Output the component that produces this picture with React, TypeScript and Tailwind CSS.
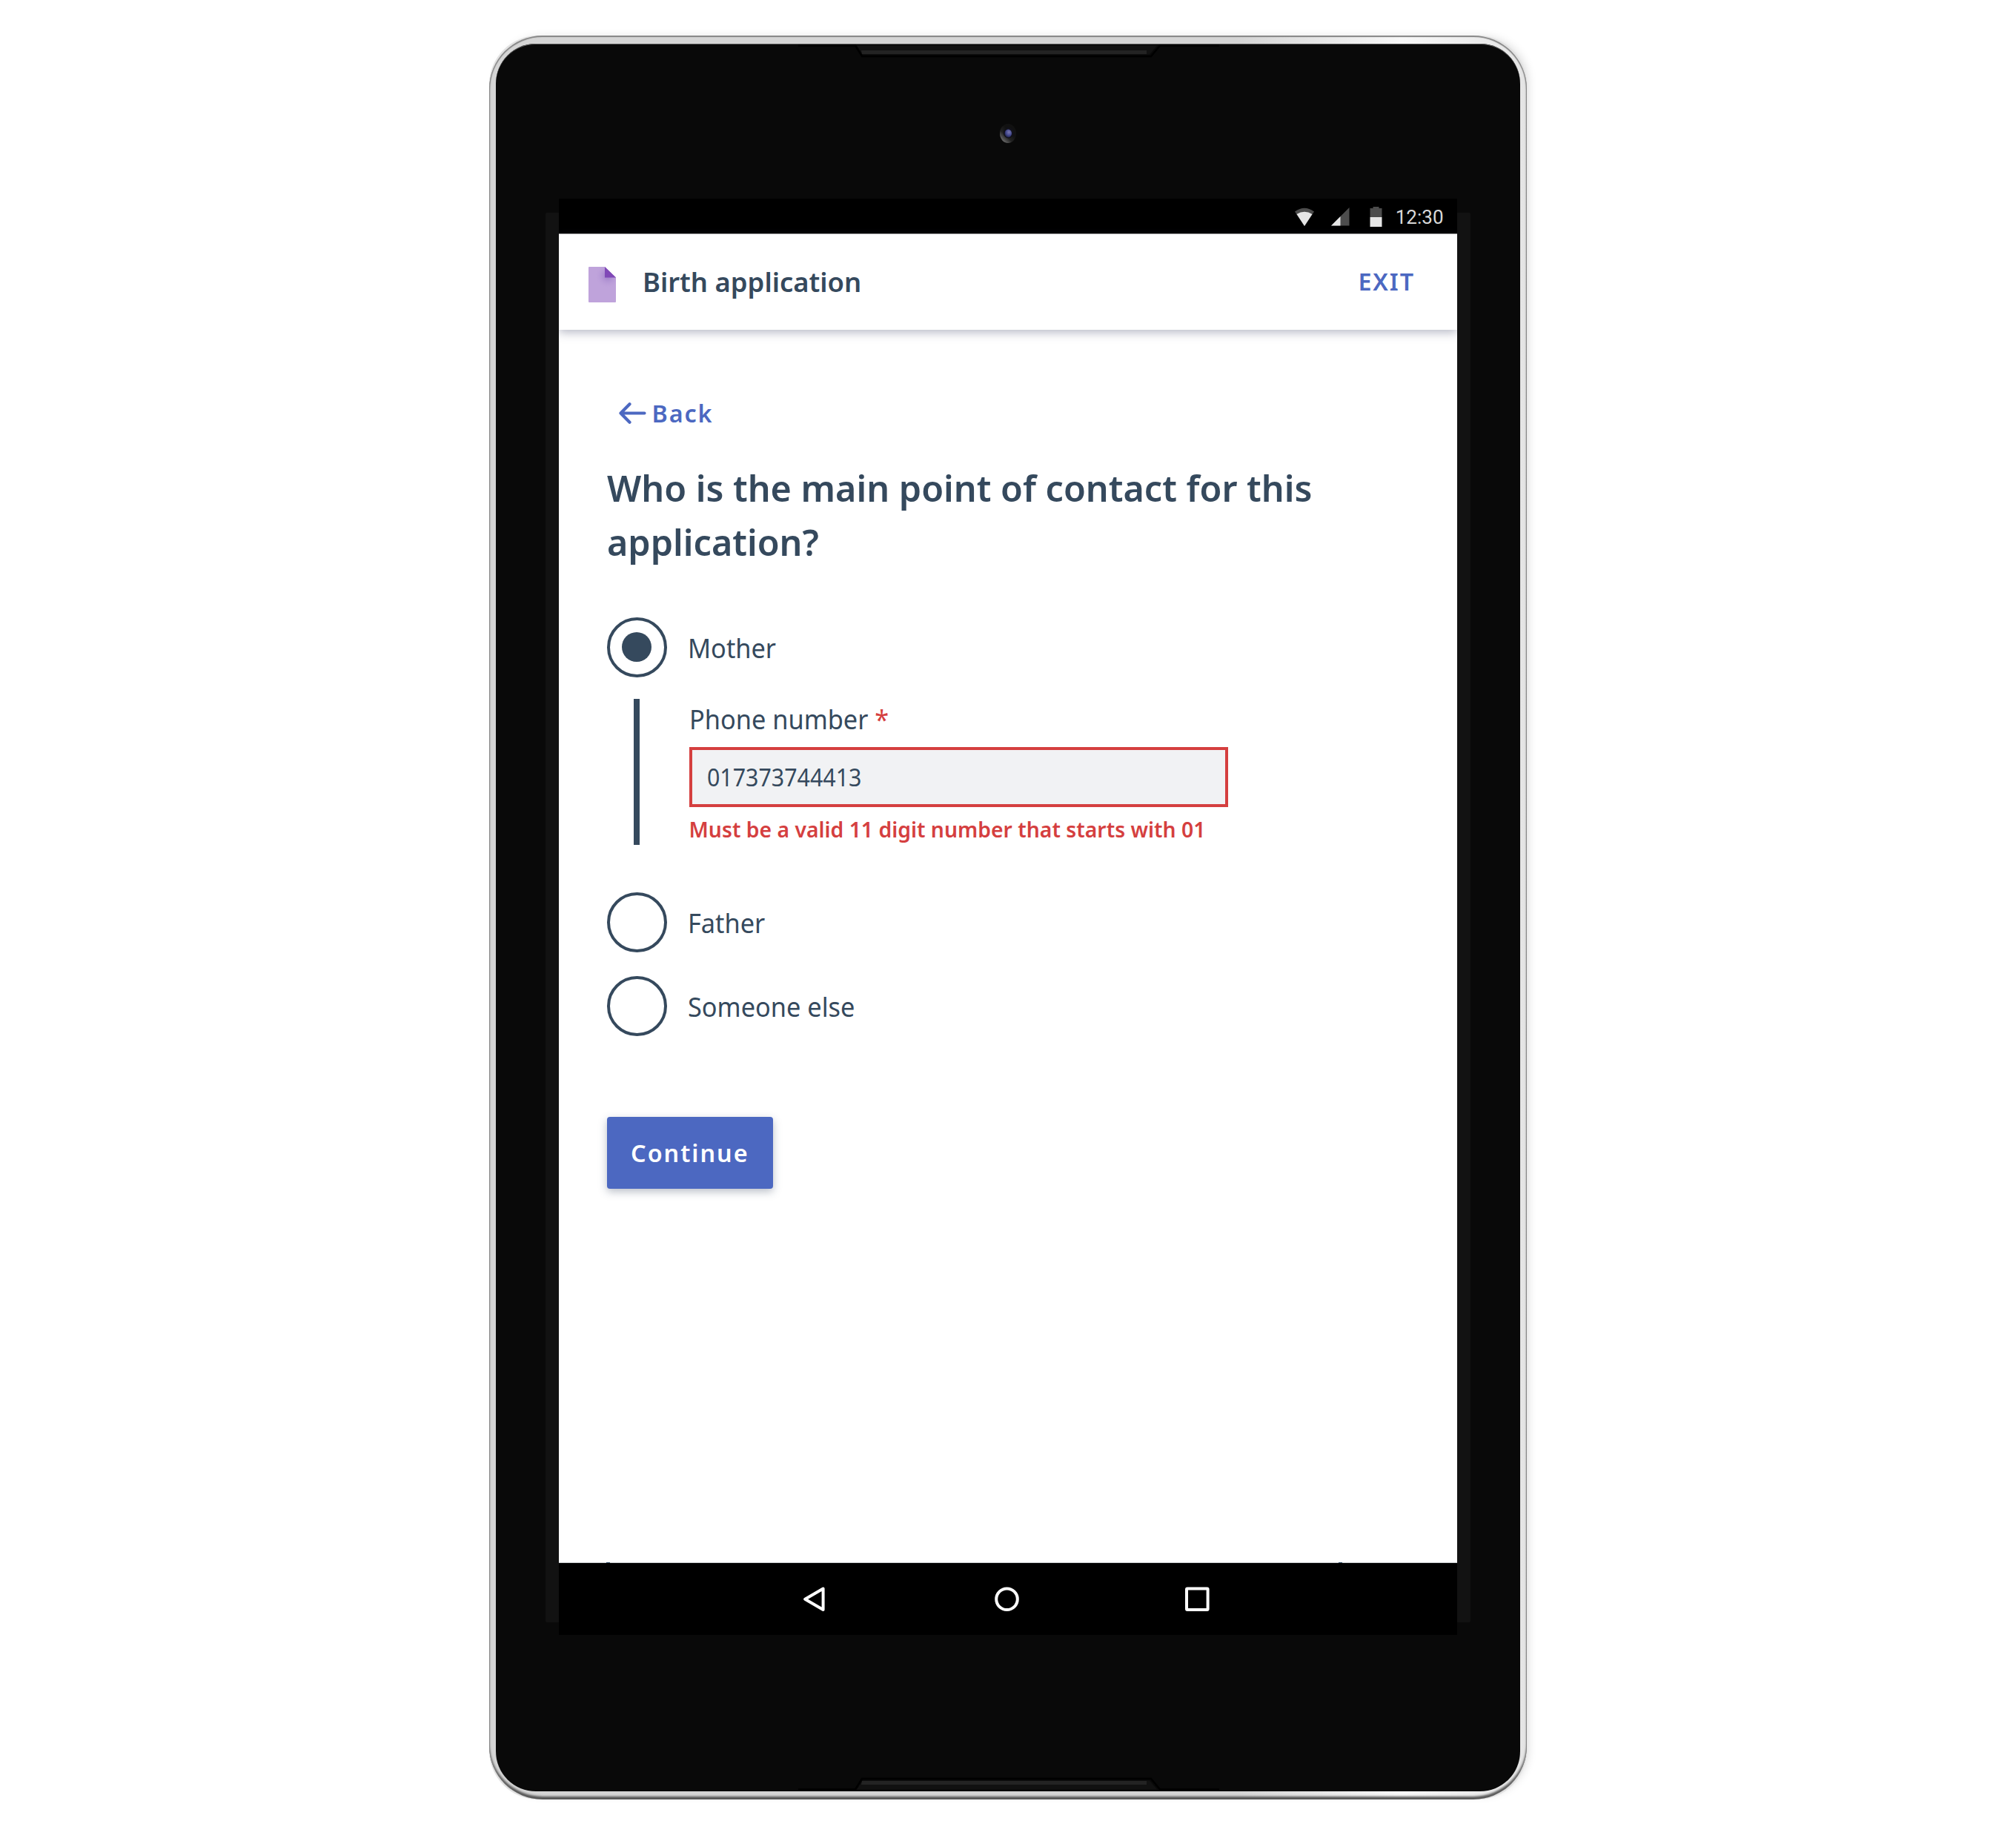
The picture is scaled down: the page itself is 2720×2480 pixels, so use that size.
import React from 'react';

type RadioRowProps = { label: string; checked?: boolean; className?: string };

function RadioRow({ label, checked = false, className = '' }: RadioRowProps) {
  return (
    <label className={`flex h-[81px] items-center gap-[28px] ${className}`}>
      <span className="flex size-[81px] shrink-0 items-center justify-center rounded-full border-4 border-[#35495d]">
        {checked && <span className="size-[40.5px] rounded-full bg-[#35495d]" />}
      </span>
      <span className="mt-[2px] origin-left scale-x-[0.943] text-[36.4px] leading-[49px] whitespace-nowrap">{label}</span>
    </label>
  );
}

function Speaker({ className }: { className: string }) {
  return (
    <svg className={className} width="640" height="20" viewBox="0 0 640 20" fill="none">
      <path d="M0 2.5H77L86 17H476L488 2.5H568" stroke="#000" strokeWidth="2.5" />
      <path d="M79 2.5H484L474 14.5H87Z" fill="#111" />
      <path d="M85 9H470V14H86Z" fill="#232323" />
    </svg>
  );
}

function Camera() {
  return (
    <svg className="absolute left-[680px] top-[108px]" width="22" height="26" viewBox="0 0 22 26">
      <defs>
        <linearGradient id="lens" x1="0.15" y1="0.95" x2="0.6" y2="0.4">
          <stop offset="0" stopColor="#777" />
          <stop offset="0.55" stopColor="#222" />
          <stop offset="1" stopColor="#111" />
        </linearGradient>
        <radialGradient id="glass" cx="0.6" cy="0.35" r="0.7">
          <stop offset="0" stopColor="#7a78b0" />
          <stop offset="0.6" stopColor="#40458a" />
          <stop offset="1" stopColor="#181a3a" />
        </radialGradient>
      </defs>
      <ellipse cx="11" cy="13" rx="11" ry="13" fill="url(#lens)" />
      <ellipse cx="11.8" cy="12" rx="7" ry="7.5" fill="#111118" />
      <ellipse cx="11.3" cy="13" rx="4.8" ry="5.4" fill="url(#glass)" />
    </svg>
  );
}

function StatusBar() {
  return (
    <div className="flex h-[47px] items-center justify-end bg-black pt-px pr-[18.5px]">
      <svg className="mr-[22px]" width="28" height="27" viewBox="0 0 28 27">
        <path d="M1 6.5Q14-3 27 6.5L14 26Z" fill="#4d4d4d" />
        <path d="M3.5 10Q14 3.5 24.5 10L14 26Z" fill="#e6e6e6" />
      </svg>
      <svg className="mr-[27px]" width="25" height="25" viewBox="0 0 25 25">
        <path d="M24.5 0V24.5H0Z" fill="#4d4d4d" />
        <path d="M12.5 12V24.5H0Z" fill="#e6e6e6" />
      </svg>
      <svg className="mr-[18px]" width="17" height="27" viewBox="0 0 17 27">
        <path d="M4.5 0H12.5V2H16.5V14H0.5V2H4.5Z" fill="#4d4d4d" />
        <path d="M0.5 14H16.5V27H0.5Z" fill="#e6e6e6" />
      </svg>
      <span className="mt-[2px] font-['Roboto',sans-serif] text-[26px] leading-none text-[#d9d9d9]">12:30</span>
    </div>
  );
}

function AppBar() {
  return (
    <header className="relative flex h-[130px] items-center border-t border-[#999] bg-white pr-[57px] pb-px pl-[40px] shadow-[0_4px_12px_rgba(53,60,93,0.34)]">
      <svg className="mt-[8px] shrink-0 overflow-visible" width="37" height="48" viewBox="0 0 37 48">
        <defs>
          <radialGradient id="fold" cx="26" cy="12" r="17" gradientUnits="userSpaceOnUse">
            <stop offset="0" stopColor="#8e6fc0" stopOpacity="0.75" />
            <stop offset="1" stopColor="#be9fdb" stopOpacity="0" />
          </radialGradient>
        </defs>
        <path d="M1 0H22L37 14.5V47a1 1 0 0 1-1 1H1a1 1 0 0 1-1-1V1a1 1 0 0 1 1-1Z" fill="#bfa3db" />
        <path d="M1 0H22L37 14.5V47H0V0Z" fill="url(#fold)" />
        <path d="M22 0L37 14.5H22Z" fill="#8049b7" />
      </svg>
      <h1 className="ml-[36px] text-[36.4px] leading-[49px] font-semibold">Birth application</h1>
      <button className="mb-[3px] ml-auto text-[32.3px] leading-[44px] font-semibold tracking-[1.9px] text-[#4c68c1]">EXIT</button>
    </header>
  );
}

function ContactForm() {
  return (
    <main className="flex-1 bg-white pt-[88px] pl-[64.5px]">
      <button className="flex h-[48px] items-center pl-[16px] text-[#4c68c1]">
        <svg width="37" height="29" viewBox="0 0 37 29" fill="none" stroke="currentColor" strokeWidth="4.2" strokeLinecap="round" strokeLinejoin="round">
          <path d="M34.5 14.5H2.5M14.5 2.3L2.5 14.5L14.5 26.7" />
        </svg>
        <span className="ml-[8px] text-[32.3px] leading-[44px] font-semibold tracking-[1.9px]">Back</span>
      </button>

      <h2 className="mt-[41px] ml-[0.5px] w-[1010px] text-[48.5px] leading-[73px] font-semibold">
        Who is the main point of contact for this application?
      </h2>

      <RadioRow className="mt-[64.5px]" label="Mother" checked />

      <section className="mt-[29.5px] flex h-[197px] pl-[36.5px]">
        <span className="w-[8px] bg-[#35495d]" />
        <div className="ml-[66.5px] pt-[3px]">
          <div className="origin-left scale-x-[0.943] text-[36.4px] leading-[49px]">
            Phone number <span className="text-[#d53f3f]">*</span>
          </div>
          <div className="mt-[13px] ml-[0.5px] flex h-[81px] w-[727px] items-center border-4 border-[#d53f3f] bg-[#f1f2f4] pb-px pl-[20px]">
            <span className="origin-left scale-x-[0.94] text-[32.3px] leading-[44px]">017373744413</span>
          </div>
          <p className="mt-[10px] text-[28.35px] leading-[40px] font-semibold whitespace-nowrap text-[#d53f3f]">
            Must be a valid 11 digit number that starts with 01
          </p>
        </div>
      </section>

      <RadioRow className="mt-[64px]" label="Father" />
      <RadioRow className="mt-[32px]" label="Someone else" />

      <button className="mt-[109px] block h-[97px] w-[224.5px] rounded-[4px] bg-[#4c68c1] pl-[32.5px] text-left text-[32.3px] leading-[97px] font-semibold tracking-[2.02px] text-white shadow-[0_4px_12px_rgba(53,67,93,0.34)]">
        Continue
      </button>
    </main>
  );
}

function NavigationBar() {
  return (
    <nav className="relative flex h-[98px] items-center justify-center border-t border-[#c9cccf] bg-black">
      <span className="absolute -top-px left-[64px] h-px w-[5px] bg-[#22405a]" />
      <span className="absolute -top-px left-[1052px] h-px w-[5px] bg-[#22405a]" />
      <svg className="mr-[4px]" width="550" height="34" viewBox="0 0 550 34" fill="none" stroke="#fff" strokeWidth="4">
        <path d="M27.6 2.5V31L3.2 16.8Z" strokeLinejoin="round" />
        <circle cx="275.5" cy="16.8" r="14.3" />
        <rect x="518" y="2.5" width="28.6" height="28.6" rx="1" />
      </svg>
    </nav>
  );
}

export default function App() {
  return (
    <div className="flex h-[2480px] w-[2720px] justify-center bg-white pt-[48px] font-['Noto_Sans',sans-serif] text-[#35495d]">
      <div className="relative h-[2380px] w-[1400px] rounded-[66px] bg-[#e2e2e2] shadow-[6px_-2px_14px_-6px_rgba(0,0,0,0.18)]">
        <div className="h-full rounded-[72px] bg-[linear-gradient(to_right,#d5d5d5_0%,#d5d5d5_72%,#f8f8f8_88%,#e4e4e4_100%)] px-[9px] pt-[11px] shadow-[inset_0_1px_1px_1px_#858585,inset_0_-4px_3px_0px_#555]">
          <div className="relative flex h-[2358px] flex-col items-center rounded-[54px] bg-[#090909] pt-[209px] shadow-[inset_0_1px_0_#555]">
            <Speaker className="absolute top-0 left-[408px]" />
            <Camera />
            <div className="absolute top-[228px] left-[67px] h-[1902px] w-[1248px] rounded-[2px] bg-[#121212]" />
            <div className="relative flex h-[1938px] w-[1212px] flex-col overflow-hidden bg-black">
              <StatusBar />
              <AppBar />
              <ContactForm />
              <NavigationBar />
            </div>
            <Speaker className="absolute bottom-0 left-[408px] -scale-y-100" />
          </div>
        </div>
      </div>
    </div>
  );
}
